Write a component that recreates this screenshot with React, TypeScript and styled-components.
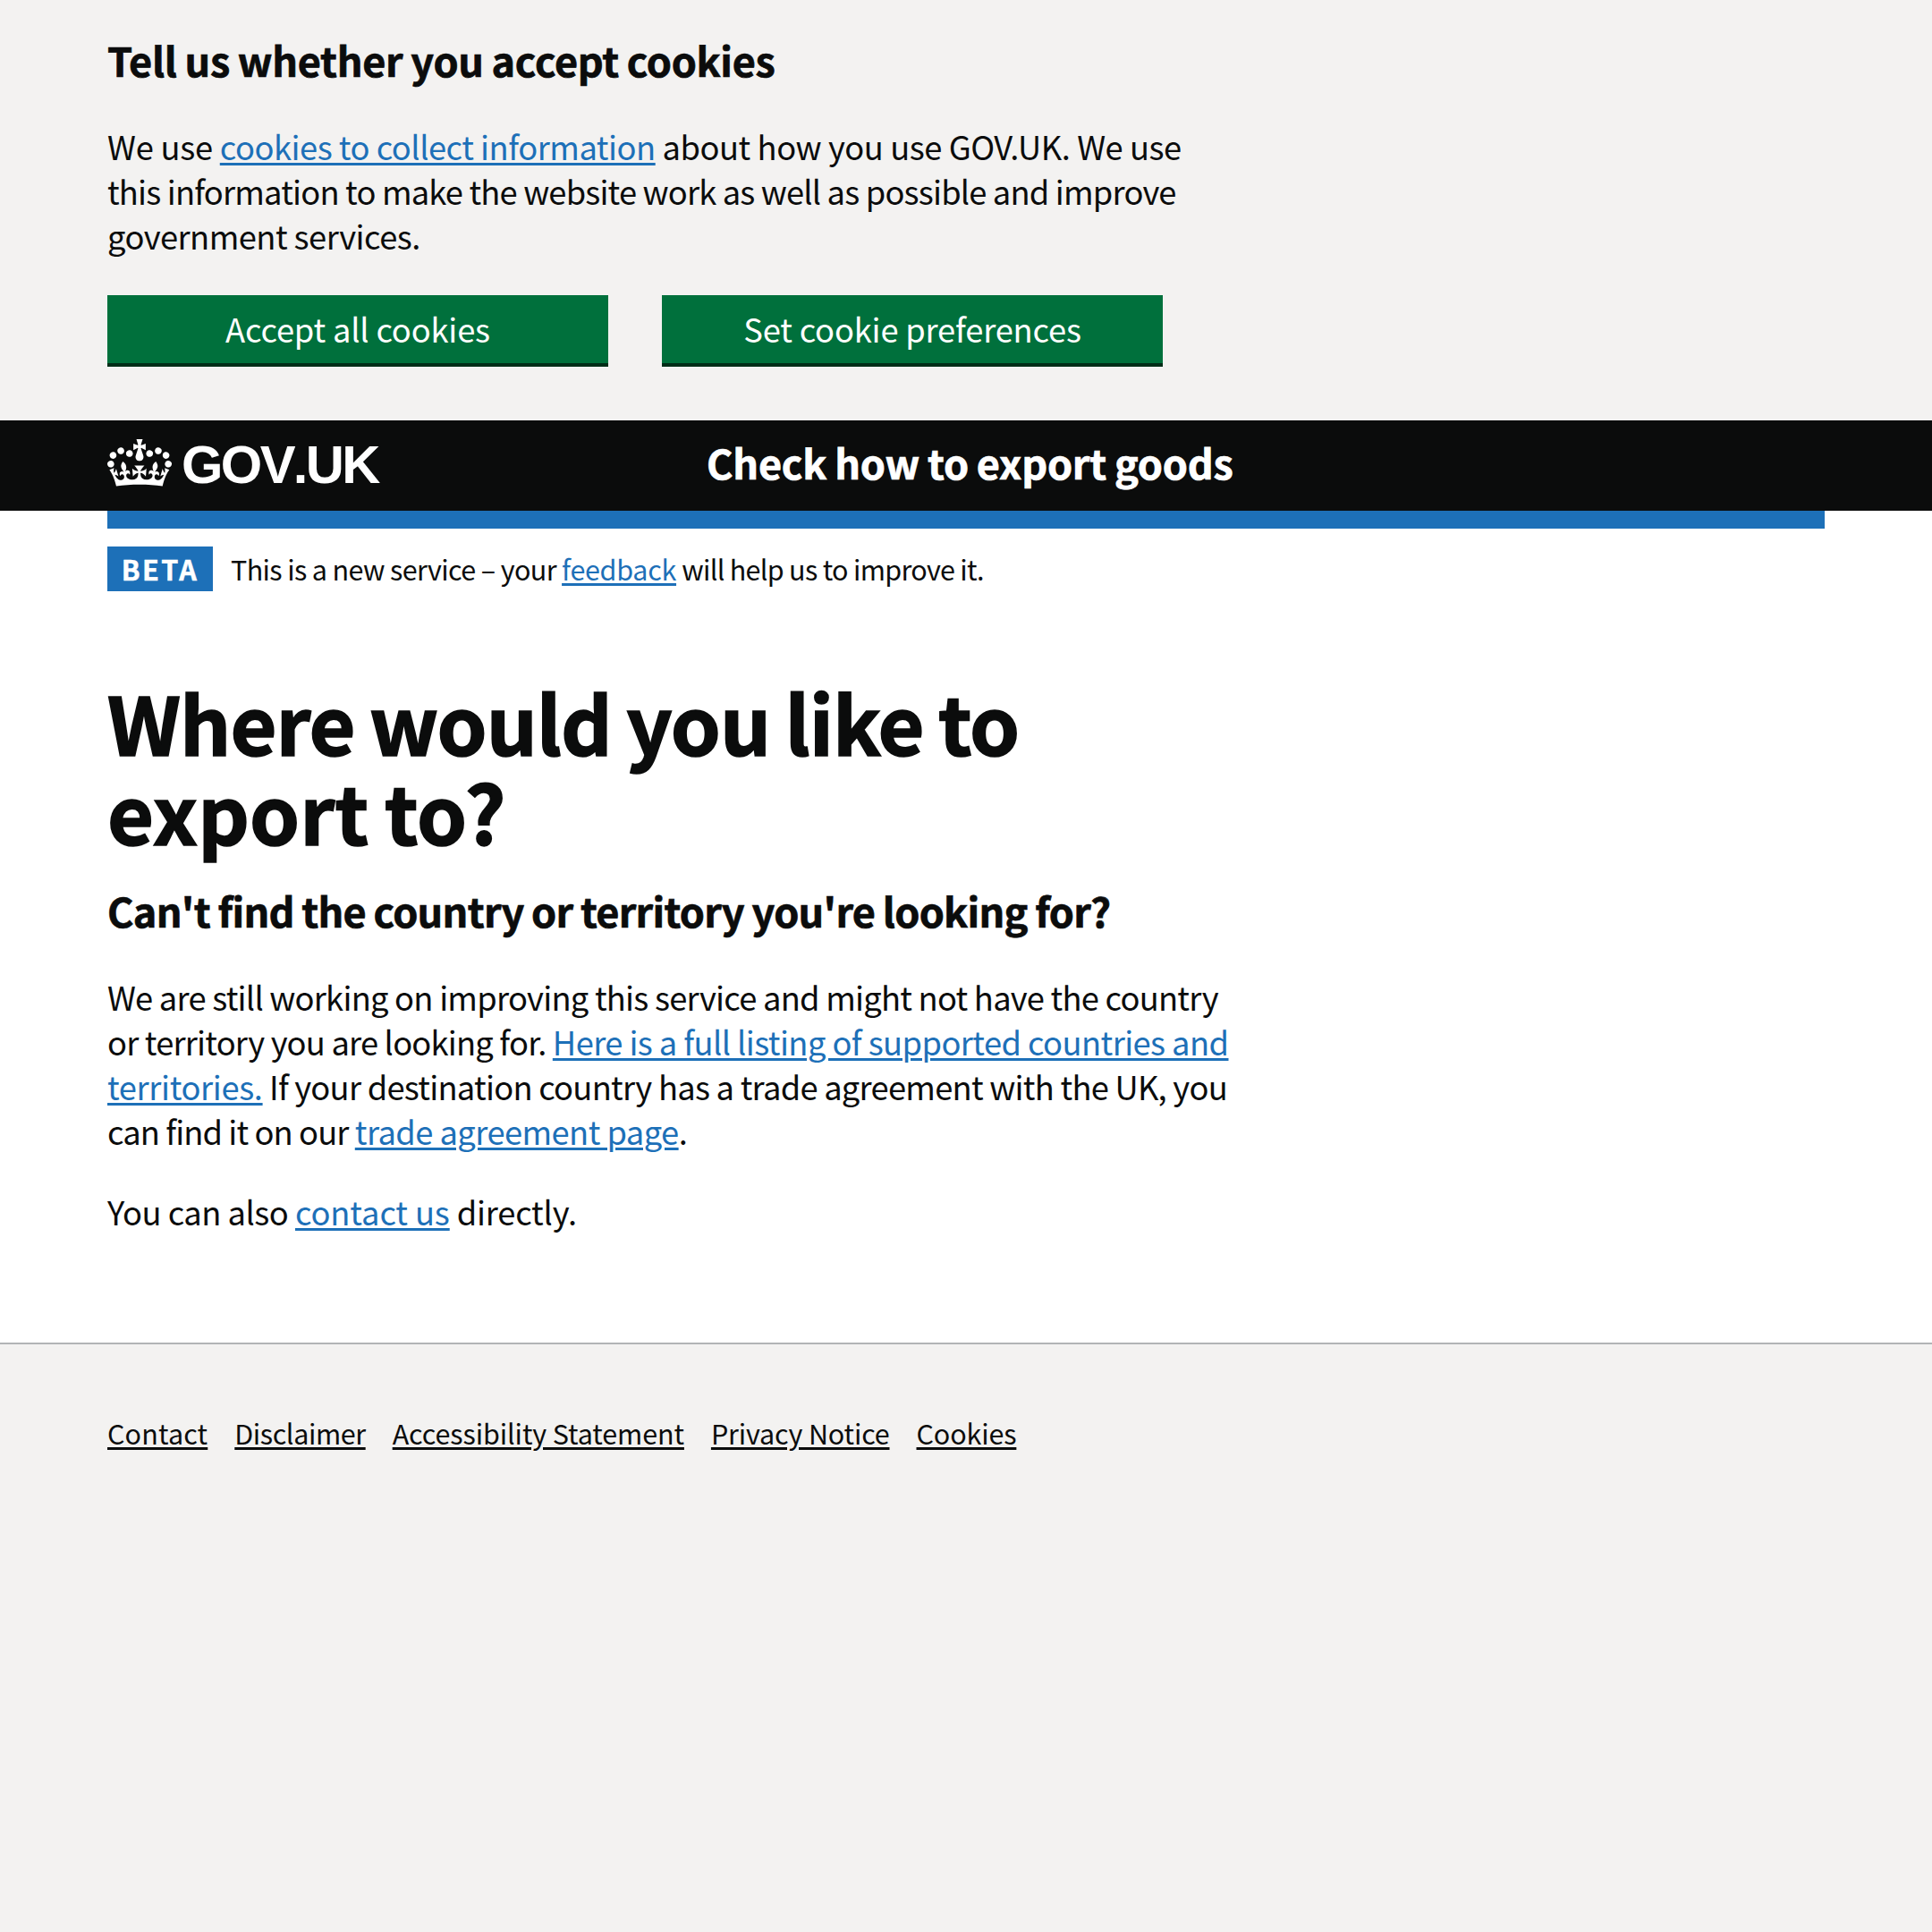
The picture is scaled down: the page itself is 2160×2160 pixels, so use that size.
import React from "react";
import styled, { createGlobalStyle } from "styled-components";

const Global = createGlobalStyle`
  *, *::before, *::after { box-sizing: border-box; }
  body {
    margin: 0;
    background: #f3f2f1;
    color: #0b0c0c;
    font-family: "Noto Sans CJK SC", "Liberation Sans", sans-serif;
    font-kerning: normal;
  }
  h1, h2, p, ul { margin: 0; padding: 0; }
`;

const Width = styled.div`
  margin: 0 120px;
`;

const CookieBanner = styled.section`
  background: #f3f2f1;
  height: 470px;
  padding-top: 37px;
`;

const HeadingMedium = styled.h2<{ $top?: number }>`
  margin-top: ${(p) => p.$top ?? 0}px;
  font-size: 45px;
  line-height: 60px;
  font-weight: 700;
  word-spacing: -1px;
  white-space: nowrap;
  -webkit-text-stroke: 0.7px currentColor;
`;

const Body = styled.p<{ $top: number }>`
  margin-top: ${(p) => p.$top}px;
  font-size: 36.3px;
  line-height: 50px;
  white-space: nowrap;
`;

const Seg = styled.span<{ $ls?: number }>`
  letter-spacing: ${(p) => p.$ls ?? 0}px;
`;

const Link = styled.a<{ $ls?: number; $dark?: boolean }>`
  color: ${(p) => (p.$dark ? "#0b0c0c" : "#1d70b8")};
  letter-spacing: ${(p) => p.$ls ?? 0}px;
  text-decoration: underline;
  text-decoration-thickness: 3px;
  text-underline-offset: 3px;
`;

const Buttons = styled.div`
  display: flex;
  gap: 60px;
  margin-top: 42px;
`;

const Button = styled.button`
  width: 560px;
  height: 76px;
  border: 0;
  padding: 0 0 2px;
  background: #00703c;
  color: #ffffff;
  box-shadow: 0 4px 0 #002d18;
  font: 400 36.3px/50px "Noto Sans CJK SC", "Liberation Sans", sans-serif;
  letter-spacing: -0.18px;
`;

const Header = styled.header`
  background: #0b0c0c;
  color: #ffffff;
  height: 101px;
`;

const HeaderInner = styled(Width)`
  display: flex;
  height: 101px;
`;

const Logo = styled.a`
  display: flex;
  width: 670px;
  color: #ffffff;
`;

const Crown = styled.svg`
  width: 72px;
  height: 53px;
  margin-top: 21px;
  filter: blur(0.7px);
`;

const LogoText = styled.span`
  font: 700 59.7px/70px "Liberation Sans", sans-serif;
  font-kerning: none;
  letter-spacing: -2.6px;
  margin: 15px 0 0 11px;
`;

const ServiceName = styled.span`
  font-size: 45px;
  line-height: 60px;
  font-weight: 700;
  letter-spacing: -0.22px;
  word-spacing: -1px;
  margin-top: 17px;
  -webkit-text-stroke: 0.7px currentColor;
`;

const BlueBar = styled.div`
  height: 20px;
  background: #1d70b8;
`;

const Page = styled.div`
  background: #ffffff;
  height: 930px;
`;

const Phase = styled.div`
  display: flex;
  align-items: center;
  padding-top: 20px;
  font-size: 30.5px;
  line-height: 50px;
  white-space: nowrap;
`;

const Tag = styled.strong`
  width: 118px;
  height: 50px;
  margin-right: 20px;
  background: #1d70b8;
  color: #ffffff;
  font-weight: 700;
  letter-spacing: 2.4px;
  text-align: center;
  -webkit-text-stroke: 0.5px currentColor;
`;

const Title = styled.h1`
  margin-top: 95px;
  margin-bottom: -1px;
  font-size: 89.6px;
  line-height: 100px;
  font-weight: 700;
  word-spacing: -3px;
  white-space: nowrap;
  -webkit-text-stroke: 1.6px currentColor;
`;

const Footer = styled.footer`
  border-top: 2px solid #b1b4b6;
  padding-top: 79px;
  height: 659px;
`;

const FooterLinks = styled.ul`
  display: flex;
  gap: 30px;
  list-style: none;
  font-size: 30.5px;
  line-height: 40px;
`;

const footerLinks: { label: string; ls: number }[] = [
  { label: "Contact", ls: 0.15 },
  { label: "Disclaimer", ls: -0.4 },
  { label: "Accessibility Statement", ls: -0.1 },
  { label: "Privacy Notice", ls: -0.17 },
  { label: "Cookies", ls: -0.14 },
];

export default function App() {
  return (
    <>
      <Global />
      <CookieBanner>
        <Width>
          <HeadingMedium><Seg $ls={-0.31}>Tell us whether you accept cookies</Seg></HeadingMedium>
          <Body $top={41}>
            <Seg $ls={-0.23}>We use </Seg><Link $ls={-0.48}>cookies to collect information</Link><Seg $ls={-0.43}> about how you use GOV.UK. We use</Seg><br />
            <Seg $ls={-0.81}>this information to make the website work as well as possible and improve</Seg><br />
            <Seg $ls={-0.54}>government services.</Seg>
          </Body>
          <Buttons>
            <Button>Accept all cookies</Button>
            <Button>Set cookie preferences</Button>
          </Buttons>
        </Width>
      </CookieBanner>
      <Header>
        <HeaderInner>
          <Logo>
            <Crown viewBox="0 0 132 97" fill="#ffffff">
              <path fillRule="evenodd" d="M25 30.2c3.5 1.5 7.7-.2 9.1-3.7 1.5-3.6-.2-7.8-3.9-9.2-3.6-1.4-7.6.3-9.1 3.9-1.4 3.5.3 7.5 3.9 9zM9 39.5c3.6 1.5 7.8-.2 9.2-3.7 1.5-3.6-.2-7.8-3.9-9.1-3.6-1.5-7.6.2-9.1 3.8-1.4 3.5.3 7.5 3.8 9zM4.4 57.2c3.5 1.5 7.7-.2 9.1-3.8 1.5-3.6-.2-7.7-3.9-9.1-3.5-1.5-7.6.3-9.1 3.8-1.4 3.5.3 7.6 3.9 9.1zm38.3-21.4c3.5 1.5 7.7-.2 9.1-3.8 1.5-3.6-.2-7.7-3.9-9.1-3.6-1.5-7.6.3-9.1 3.8-1.3 3.6.4 7.7 3.9 9.1zm64.4-5.6c-3.6 1.5-7.8-.2-9.1-3.7-1.5-3.6.2-7.8 3.8-9.2 3.6-1.4 7.7.3 9.2 3.9 1.3 3.5-.4 7.5-3.9 9zm15.9 9.3c-3.6 1.5-7.7-.2-9.1-3.7-1.5-3.6.2-7.8 3.7-9.1 3.6-1.5 7.7.2 9.2 3.8 1.5 3.5-.3 7.5-3.8 9zm4.7 17.7c-3.6 1.5-7.8-.2-9.2-3.8-1.5-3.6.2-7.7 3.9-9.1 3.6-1.5 7.7.3 9.2 3.8 1.3 3.5-.4 7.6-3.9 9.1zM89.3 35.8c-3.6 1.5-7.8-.2-9.2-3.8-1.4-3.6.2-7.7 3.9-9.1 3.6-1.5 7.7.3 9.2 3.8 1.4 3.6-.3 7.7-3.9 9.1zM69.7 17.7l8.9 4.7V9.3l-8.9 2.8c-.2-.3-.5-.6-.9-.9L72.4 0H59.6l3.5 11.2c-.3.3-.6.5-.9.9l-8.8-2.8v13.1l8.8-4.7c.3.3.6.7.9.9l-5 15.4v.1c-.2.8-.4 1.6-.4 2.4 0 4.1 3.1 7.5 7 8.1h.2c.3 0 .7.1 1 .1.4 0 .7 0 1-.1h.2c4-.6 7.1-4.1 7.1-8.1 0-.8-.1-1.7-.4-2.4V34l-5.1-15.4c.4-.2.7-.6 1-.9zM66 92.8c16.9 0 32.8 1.1 47.1 3.2 4-16.9 8.9-26.7 14-33.5l-9.6-3.4c1 4.9 1.1 7.2 0 10.2-1.5-1.4-3-4.3-4.2-8.7L108.6 76c2.8-2 5-3.2 7.5-3.3-4.4 9.4-10 11.9-13.6 11.2-4.3-.8-6.3-4.6-5.6-7.9 1-4.7 5.7-5.9 8-.5 4.3-8.7-3-11.4-7.6-8.8 7.1-7.2 7.9-13.5 2.1-21.1-8 6.1-8.1 12.3-4.5 20.8-4.7-5.4-12.1-2.5-9.5 6.2 3.4-5.2 7.9-2 7.2 3.1-.6 4.3-6.4 7.8-13.5 7.2-10.3-.9-10.9-8-11.2-13.8 2.5-.5 7.1 1.8 11 7.3L80.2 60c-4.1 4.4-8 5.3-12.3 5.4 1.4-4.4 8-11.6 8-11.6H55.5s6.4 7.2 7.9 11.6c-4.2-.1-8-1-12.3-5.4l1.4 16.4c3.9-5.5 8.5-7.7 10.9-7.3-.3 5.8-.9 12.8-11.1 13.8-7.2.6-12.9-2.9-13.5-7.2-.7-5 3.8-8.3 7.1-3.1 2.7-8.7-4.6-11.6-9.4-6.2 3.7-8.5 3.6-14.7-4.6-20.8-5.8 7.6-5 13.9 2.2 21.1-4.7-2.6-11.9.1-7.7 8.8 2.3-5.5 7.1-4.2 8.1.5.7 3.3-1.3 7.1-5.7 7.9-3.5.7-9-1.8-13.5-11.2 2.5.1 4.7 1.3 7.5 3.3l-4.7-15.4c-1.2 4.4-2.7 7.2-4.3 8.7-1.1-3-.9-5.3 0-10.2l-9.5 3.4c5 6.9 9.9 16.7 14 33.5 14.8-2.1 30.8-3.2 47.7-3.2z" />
            </Crown>
            <LogoText>GOV.UK</LogoText>
          </Logo>
          <ServiceName>Check how to export goods</ServiceName>
        </HeaderInner>
      </Header>
      <Page>
        <Width>
          <BlueBar />
          <Phase>
            <Tag>BETA</Tag>
            <span>
              <Seg $ls={-0.62}>This is a new service – your </Seg><Link $ls={-0.28}>feedback</Link><Seg $ls={-0.69}> will help us to improve it.</Seg>
            </span>
          </Phase>
          <Title>
            <Seg $ls={-0.97}>Where would you like to</Seg><br />
            <Seg $ls={0.15}>export to?</Seg>
          </Title>
          <HeadingMedium $top={33}><Seg $ls={-0.72}>Can't find the country or territory you're looking for?</Seg></HeadingMedium>
          <Body $top={41}>
            <Seg $ls={-0.75}>We are still working on improving this service and might not have the country</Seg><br />
            <Seg $ls={-0.79}>or territory you are looking for. </Seg><Link $ls={-0.565}>Here is a full listing of supported countries and</Link><br />
            <Link $ls={-0.35}>territories.</Link><Seg $ls={-0.74}> If your destination country has a trade agreement with the UK, you</Seg><br />
            <Seg $ls={-0.89}>can find it on our </Seg><Link $ls={-0.55}>trade agreement page</Link><Seg>.</Seg>
          </Body>
          <Body $top={40}>
            <Seg $ls={-0.5}>You can also </Seg><Link $ls={-0.12}>contact us</Link><Seg $ls={-0.2}> directly.</Seg>
          </Body>
        </Width>
      </Page>
      <Footer>
        <Width>
          <FooterLinks>
            {footerLinks.map((item) => (
              <li key={item.label}><Link $dark $ls={item.ls}>{item.label}</Link></li>
            ))}
          </FooterLinks>
        </Width>
      </Footer>
    </>
  );
}
